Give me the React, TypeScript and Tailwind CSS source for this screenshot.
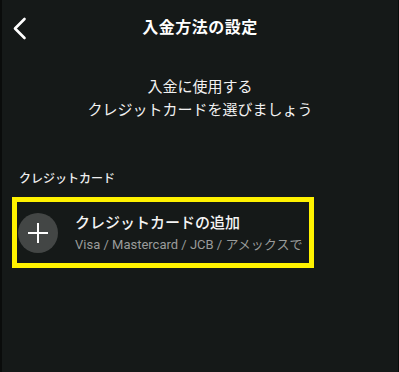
import React from 'react';

const font = { fontFamily: '"Roboto", "Noto Sans CJK JP", sans-serif' };

// 入金方法の設定 画面
const App: React.FC = () => {
  return (
    <div
      className="w-[399px] h-[372px] bg-[#151918] border-l-2 border-r border-[#0a0c0b] text-white overflow-hidden"
      style={font}
    >
      {/* ヘッダー */}
      <div className="relative h-14 flex items-center justify-center">
        <button className="absolute left-[9px] top-[17px] w-4 h-[23px] flex items-center justify-center">
          <svg width="15" height="23" viewBox="0 0 15 23" fill="none">
            <path d="M12.5 2 L3 11.5 L12.5 21" stroke="white" strokeWidth="2.6" strokeLinecap="round" strokeLinejoin="round" />
          </svg>
        </button>
        <h1 className="text-[16px] font-bold tracking-[0.5px]">入金方法の設定</h1>
      </div>

      {/* 説明文 */}
      <div className="mt-[20px] text-center text-[15px] leading-[23px] text-[#f2f2f2]">
        <p>入金に使用する</p>
        <p>クレジットカードを選びましょう</p>
      </div>

      {/* セクション */}
      <p className="mt-[49px] ml-[17px] text-[12px] leading-4 font-medium text-[#eeeeee]">クレジットカード</p>

      <div className="mt-[10px] ml-[10px] w-[302px] h-[71px] border-[5px] border-[#fff200] flex items-center">
        <div className="ml-px w-10 h-10 rounded-full bg-[#434645] flex items-center justify-center shrink-0">
          <svg width="22" height="22" viewBox="0 0 22 22">
            <path d="M11 1 V21 M1 11 H21" stroke="white" strokeWidth="2" />
          </svg>
        </div>
        <div className="ml-[17px] flex flex-col gap-1">
          <span className="text-[15px] leading-5 font-medium text-[#f4f4f4]">クレジットカードの追加</span>
          <span className="text-[13px] leading-4 text-[#9a9c9b] whitespace-nowrap">
            Visa / Mastercard / JCB / アメックスで
          </span>
        </div>
      </div>
    </div>
  );
};

export default App;
